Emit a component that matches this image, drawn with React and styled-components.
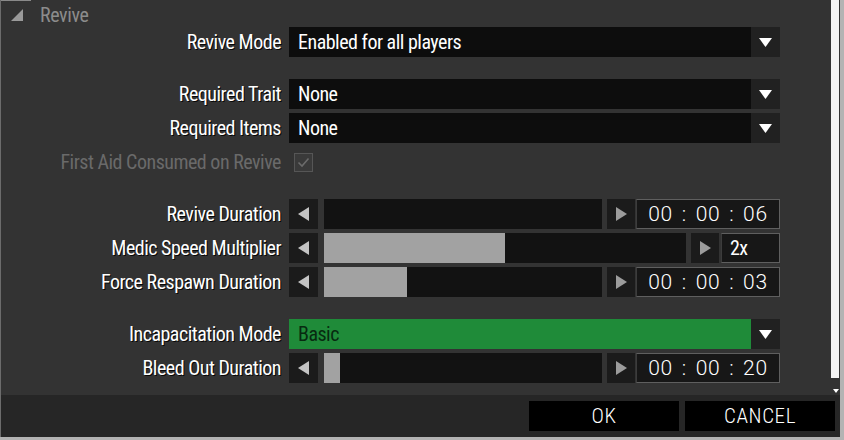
import React from 'react';
import styled, { createGlobalStyle } from 'styled-components';

const GlobalStyle = createGlobalStyle`
  html, body {
    margin: 0;
    padding: 0;
    background: #b3b3b3;
  }
  * {
    box-sizing: border-box;
  }
`;

const TEXT_FONT = `"Liberation Sans Narrow", "Roboto Condensed", "DejaVu Sans Condensed", sans-serif`;
const DIGIT_FONT = `Roboto, "Liberation Sans", sans-serif`;

const Screen = styled.div`
  width: 844px;
  height: 440px;
  overflow: hidden;
  background: #b3b3b3;
`;

const Dialog = styled.div`
  width: 840px;
  height: 437px;
  display: flex;
  flex-direction: column;
  border-left: 1px solid #6c6c6c;
`;

const Body = styled.div`
  height: 395px;
  display: flex;
  background: #333333;
`;

const Scroll = styled.div`
  flex: 1;
  display: flex;
  flex-direction: column;
`;

const ScrollBar = styled.div`
  width: 9px;
  display: flex;
  flex-direction: column;
  align-items: center;
`;

const Thumb = styled.div`
  width: 8px;
  height: 378px;
  background: #f4f4f4;
  align-self: flex-start;
`;

const ScrollArrow = styled.svg`
  margin-top: 11px;
`;

const Header = styled.div`
  position: relative;
  height: 27px;
  display: flex;
  align-items: center;
  gap: 17px;
  padding: 2px 0 0 10px;
  font-family: ${TEXT_FONT};
  font-size: 20px;
  letter-spacing: -0.4px;
  color: #8c8c8c;

  &::before {
    content: '';
    position: absolute;
    top: 0;
    left: 0;
    width: 30px;
    height: 1px;
    background: #8a8a8a;
  }
`;

const Rows = styled.div`
  display: flex;
  flex-direction: column;
  gap: 4px;
`;

const Row = styled.div`
  display: grid;
  grid-template-columns: 280px 491px;
  column-gap: 8px;
  height: 30px;
  margin-top: ${(p) => (p.$spaced ? '18px' : '0')};
`;

const Label = styled.div`
  font-family: ${TEXT_FONT};
  font-size: 20px;
  letter-spacing: -0.5px;
  line-height: 30px;
  text-align: right;
  white-space: nowrap;
  color: ${(p) => (p.$disabled ? '#6a6a6a' : '#ffffff')};
  text-shadow: ${(p) => (p.$disabled ? 'none' : '1px 1px 0 rgba(0, 0, 0, 0.85)')};
`;

const Combo = styled.div`
  display: flex;
  height: 30px;
`;

const ComboField = styled.div`
  flex: 1;
  padding-left: 9px;
  font-family: ${TEXT_FONT};
  font-size: 20px;
  letter-spacing: -0.5px;
  line-height: 30px;
  background: ${(p) => (p.$active ? '#1f8b39' : '#0d0d0d')};
  color: ${(p) => (p.$active ? '#072a10' : '#ffffff')};
`;

const ComboButton = styled.div`
  width: 29px;
  display: flex;
  align-items: center;
  justify-content: center;
  background: #212121;
`;

const Check = styled.div`
  width: 19px;
  height: 19px;
  margin: 6px 0 0 5px;
  border: 1px solid #565656;
  background: #3a3a3a;
  display: flex;
  align-items: center;
  justify-content: center;
`;

const Slider = styled.div`
  display: flex;
  height: 30px;
`;

const StepButton = styled.div`
  width: ${(p) => p.$w}px;
  display: flex;
  align-items: center;
  justify-content: center;
  background: #1b1b1b;
`;

const Track = styled.div`
  flex: 1;
  margin: 0 5px 0 6px;
  background: #121212;
  display: flex;
`;

const Fill = styled.div`
  background: #a2a2a2;
`;

const ValueBox = styled.div`
  width: ${(p) => p.$w}px;
  margin-left: ${(p) => p.$gap}px;
  border: 1px solid #5f5f5f;
  border-left-color: #3c3c3c;
  background: #171717;
  color: #ffffff;
  white-space: pre;
  display: flex;
  align-items: center;
  justify-content: ${(p) => (p.$time ? 'center' : 'flex-start')};
  padding-left: ${(p) => (p.$time ? '0' : '8px')};
  font-family: ${(p) => (p.$time ? DIGIT_FONT : TEXT_FONT)};
  font-weight: ${(p) => (p.$time ? 300 : 400)};
  font-size: ${(p) => (p.$time ? '21px' : '20px')};
  word-spacing: ${(p) => (p.$time ? '3px' : '0')};
  letter-spacing: ${(p) => (p.$time ? '0.7px' : '-0.5px')};
`;

const Footer = styled.div`
  height: 42px;
  display: flex;
  justify-content: flex-end;
  gap: 6px;
  padding: 6px 5px 6px 0;
  background: #262626;
`;

const Button = styled.div`
  width: 150px;
  height: 30px;
  background: #000000;
  color: #ffffff;
  display: flex;
  align-items: center;
  justify-content: center;
  font-family: ${TEXT_FONT};
  font-size: 21px;
  font-weight: 300;
  letter-spacing: 0.6px;
`;

const DownArrow = ({ color = '#ffffff' }) => (
  <svg width="13" height="9" viewBox="0 0 13 9">
    <polygon points="0,0 13,0 6.5,9" fill={color} />
  </svg>
);

const LeftArrow = () => (
  <svg width="11" height="14" viewBox="0 0 11 14">
    <polygon points="11,0 11,14 0,7" fill="#c4c4c4" />
  </svg>
);

const RightArrow = () => (
  <svg width="11" height="14" viewBox="0 0 11 14">
    <polygon points="0,0 0,14 11,7" fill="#9c9c9c" />
  </svg>
);

const ComboRow = ({ label, value, active, spaced }) => (
  <Row $spaced={spaced}>
    <Label>{label}</Label>
    <Combo>
      <ComboField $active={active}>{value}</ComboField>
      <ComboButton>
        <DownArrow />
      </ComboButton>
    </Combo>
  </Row>
);

const SliderRow = ({ label, fill, value, time, spaced }) => (
  <Row $spaced={spaced}>
    <Label>{label}</Label>
    <Slider>
      <StepButton $w={29}>
        <LeftArrow />
      </StepButton>
      <Track>
        <Fill style={{ width: `${fill}%` }} />
      </Track>
      <StepButton $w={28}>
        <RightArrow />
      </StepButton>
      <ValueBox $time={time} $w={time ? 144 : 59} $gap={time ? 1 : 2}>
        {value}
      </ValueBox>
    </Slider>
  </Row>
);

export default function App() {
  return (
    <Screen>
      <GlobalStyle />
      <Dialog>
        <Body>
          <Scroll>
            <Header>
              <svg width="12" height="12" viewBox="0 0 12 12">
                <polygon points="12,0 12,12 0,12" fill="#9a9a9a" />
              </svg>
              <span>Revive</span>
            </Header>
            <Rows>
              <ComboRow label="Revive Mode" value="Enabled for all players" />
              <ComboRow spaced label="Required Trait" value="None" />
              <ComboRow label="Required Items" value="None" />
              <Row>
                <Label $disabled>First Aid Consumed on Revive</Label>
                <div>
                  <Check>
                    <svg width="13" height="11" viewBox="0 0 13 11">
                      <polyline points="1.5,5.5 5,9 11.5,1.5" fill="none" stroke="#6b6b6b" strokeWidth="1.6" />
                    </svg>
                  </Check>
                </div>
              </Row>
              <SliderRow spaced label="Revive Duration" fill={0} value="00 : 00 : 06" time />
              <SliderRow label="Medic Speed Multiplier" fill={50} value="2x" />
              <SliderRow label="Force Respawn Duration" fill={30} value="00 : 00 : 03" time />
              <ComboRow spaced label="Incapacitation Mode" value="Basic" active />
              <SliderRow label="Bleed Out Duration" fill={5.8} value="00 : 00 : 20" time />
            </Rows>
          </Scroll>
          <ScrollBar>
            <Thumb />
            <ScrollArrow width="6" height="4" viewBox="0 0 6 4">
              <polygon points="0,0 6,0 3,4" fill="#ffffff" />
            </ScrollArrow>
          </ScrollBar>
        </Body>
        <Footer>
          <Button>OK</Button>
          <Button>CANCEL</Button>
        </Footer>
      </Dialog>
    </Screen>
  );
}
